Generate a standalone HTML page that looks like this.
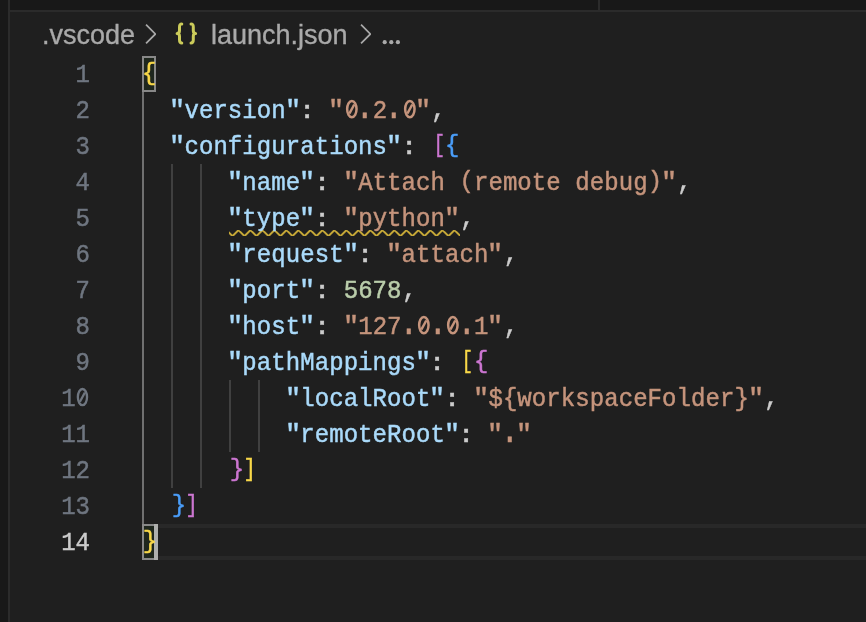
<!DOCTYPE html>
<html><head><meta charset="utf-8">
<style>
html,body{margin:0;padding:0}
body{width:866px;height:622px;overflow:hidden;background:#181818;position:relative;font-family:"Liberation Mono",monospace}
.a{position:absolute}
#editor{left:10px;top:12px;width:856px;height:610px;background:#1f1f1f}
#lb{left:8px;top:0;width:2px;height:622px;background:#2b2b2b}
#tb{left:10px;top:10px;width:856px;height:2px;background:#2b2b2b}
#ts{left:598px;top:0;width:2px;height:10px;background:#2b2b2b}
.bc{position:absolute;font-family:"Liberation Sans",sans-serif;font-size:27px;line-height:30px;color:#a9a9a9;white-space:pre;top:20px;will-change:transform;-webkit-text-stroke:0.35px}
.ln{position:absolute;left:0;width:90px;text-align:right;color:#6f7680;font-size:24px;line-height:36px;height:36px;transform:scaleY(1.1);transform-origin:0 8px;will-change:transform;-webkit-text-stroke:0.45px}
.cl{position:absolute;left:141.45px;letter-spacing:0.07px;font-size:24px;line-height:36px;height:36px;white-space:pre;color:#cccccc;transform:scaleY(1.1);transform-origin:0 8px;will-change:transform;-webkit-text-stroke:0.45px}
.k{color:#aadafa}.s{color:#c5947c}.n{color:#bacdab}
.g{color:#f9d849}.o{color:#cc76d1}.b{color:#4a9df8}
.br{display:inline-block;transform:scaleY(0.93);transform-origin:0 6px}
.z{color:transparent}
.cm{display:inline-block;transform:translate(0.75px,-0.6px)}
.pa{display:inline-block;transform:scaleY(0.9);transform-origin:0 6px}
.q{display:inline-block;transform:translateX(-0.2px) scaleX(1.12);transform-origin:7px 0}
.pd{display:inline-block;transform:translate(-0.3px,0.2px) scale(1.25,1.3);transform-origin:7.4px 22.6px}
.br.bl{transform:scale(0.8,0.93);transform-origin:12.4px 6px}
.br.brr{transform:translateX(2px) scale(0.86,0.93);transform-origin:-4.2px 6px}
.br.cb{transform:translateX(1.8px) scaleY(0.93)}
.co{display:inline-block;transform:translateY(1px) scale(1.2,0.88);transform-origin:7.6px 19px}
.guide{position:absolute;width:2px;background:#404040}
</style></head><body>
<div id="editor" class="a"></div>
<div id="lb" class="a"></div>
<div id="tb" class="a"></div>
<div id="ts" class="a"></div>

<!-- breadcrumbs -->
<div class="bc" style="left:41.5px">.vscode</div>
<div class="bc" style="left:210.8px">launch.json</div>


<!-- breadcrumb icons -->
<svg class="a" style="left:134.4px;top:18px" width="32" height="32" viewBox="0 0 16 16"><path fill="#a9a9a9" d="M10.072 8.024L5.715 3.667l.618-.62L11 7.716v.618L6.333 13l-.618-.619 4.357-4.357z"/></svg>
<svg class="a" style="left:348.6px;top:18px" width="32" height="32" viewBox="0 0 16 16"><path fill="#a9a9a9" d="M10.072 8.024L5.715 3.667l.618-.62L11 7.716v.618L6.333 13l-.618-.619 4.357-4.357z"/></svg>
<svg class="a" style="left:170px;top:18px" width="32" height="32" viewBox="0 0 32 32"><g fill="none" stroke="#cbcb5a" stroke-width="3" stroke-linecap="round" stroke-linejoin="round">
<path d="M11.8,5.9 C10,5.9 9.5,6.8 9.5,9 L9.5,12.6 C9.5,14.5 8.8,15.4 7.1,15.4 C8.8,15.4 9.5,16.3 9.5,18.2 L9.5,21.8 C9.5,24 10,25 11.8,25"/>
<path d="M21,5.9 C22.8,5.9 23.3,6.8 23.3,9 L23.3,12.6 C23.3,14.5 24,15.4 25.6,15.4 C24,15.4 23.3,16.3 23.3,18.2 L23.3,21.8 C23.3,24 22.8,25 21,25"/>
</g></svg>
<svg class="a" style="left:380px;top:38px" width="22" height="8"><g fill="#a9a9a9"><circle cx="4.7" cy="4.2" r="2.1"/><circle cx="11.3" cy="4.2" r="2.1"/><circle cx="17.9" cy="4.2" r="2.1"/></g></svg>

<!-- indent guides -->
<div class="guide" style="left:171px;top:164px;height:324px"></div>
<div class="guide" style="left:200px;top:164px;height:324px"></div>
<div class="guide" style="left:229px;top:380px;height:72px"></div>
<div class="guide" style="left:258px;top:380px;height:72px"></div>
<div class="guide" style="left:142px;top:92px;height:432px;background:#707070"></div>

<!-- current line border -->
<div class="a" style="left:142px;top:524px;width:724px;height:36px;box-sizing:border-box;border-top:4px solid #282828;border-bottom:4px solid #282828"></div>

<!-- bracket match boxes -->
<div class="a" style="left:142px;top:56px;width:14px;height:36px;box-sizing:border-box;border:2px solid #888888;background:#1e261d"></div>
<div class="a" style="left:142px;top:524px;width:16px;height:36px;box-sizing:border-box;border:2px solid #888888;background:#1e261d"></div>
<!-- cursor -->
<div class="a" style="left:154px;top:524px;width:4px;height:36px;background:#aeafad"></div>

<!-- squiggle -->
<svg class="a" style="left:228.5px;top:230px" width="232.4" height="6"><defs><pattern id="sq" width="12" height="6" patternUnits="userSpaceOnUse"><g fill="#c6a837" transform="scale(2)"><polygon points="5.5,0 2.5,3 1.1,3 4.1,0"/><polygon points="4,0 6,2 6,0.6 4.7,0"/><polygon points="0,2 1,3 2.4,3 0,0.6"/></g></pattern></defs><rect width="231" height="6" fill="url(#sq)"/></svg>

<!-- line numbers -->
<div class="ln" style="top:56px">1</div>
<div class="ln" style="top:92px">2</div>
<div class="ln" style="top:128px">3</div>
<div class="ln" style="top:164px">4</div>
<div class="ln" style="top:200px">5</div>
<div class="ln" style="top:236px">6</div>
<div class="ln" style="top:272px">7</div>
<div class="ln" style="top:308px">8</div>
<div class="ln" style="top:344px">9</div>
<div class="ln" style="top:380px">1<span class="z">0</span></div>
<div class="ln" style="top:416px">11</div>
<div class="ln" style="top:452px">12</div>
<div class="ln" style="top:488px">13</div>
<div class="ln" style="top:524px;color:#cccccc">14</div>

<!-- code -->
<div class="cl" style="top:56px"><span class="g br" style="transform:translateX(1px) scaleY(0.93)">{</span></div>
<div class="cl" style="top:92px">  <span class="k"><span class="q">"</span>version<span class="q">"</span></span><span class="co">:</span> <span class="s"><span class="q">"</span><span class="z">0</span><span class="pd">.</span>2<span class="pd">.</span><span class="z">0</span><span class="q">"</span></span><span class="cm">,</span></div>
<div class="cl" style="top:128px">  <span class="k"><span class="q">"</span>configurations<span class="q">"</span></span><span class="co">:</span> <span class="o br bl">[</span><span class="b br">{</span></div>
<div class="cl" style="top:164px">      <span class="k"><span class="q">"</span>name<span class="q">"</span></span><span class="co">:</span> <span class="s"><span class="q">"</span>Attach <span class="pa">(</span>remote debug<span class="pa">)</span><span class="q">"</span></span><span class="cm">,</span></div>
<div class="cl" style="top:200px">      <span class="k"><span class="q">"</span>type<span class="q">"</span></span><span class="co">:</span> <span class="s"><span class="q">"</span>python<span class="q">"</span></span><span class="cm">,</span></div>
<div class="cl" style="top:236px">      <span class="k"><span class="q">"</span>request<span class="q">"</span></span><span class="co">:</span> <span class="s"><span class="q">"</span>attach<span class="q">"</span></span><span class="cm">,</span></div>
<div class="cl" style="top:272px">      <span class="k"><span class="q">"</span>port<span class="q">"</span></span><span class="co">:</span> <span class="n">5678</span><span class="cm">,</span></div>
<div class="cl" style="top:308px">      <span class="k"><span class="q">"</span>host<span class="q">"</span></span><span class="co">:</span> <span class="s"><span class="q">"</span>127<span class="pd">.</span><span class="z">0</span><span class="pd">.</span><span class="z">0</span><span class="pd">.</span>1<span class="q">"</span></span><span class="cm">,</span></div>
<div class="cl" style="top:344px">      <span class="k"><span class="q">"</span>pathMappings<span class="q">"</span></span><span class="co">:</span> <span class="g br bl">[</span><span class="o br">{</span></div>
<div class="cl" style="top:380px">          <span class="k"><span class="q">"</span>localRoot<span class="q">"</span></span><span class="co">:</span> <span class="s"><span class="q">"</span>${workspaceFolder}<span class="q">"</span></span><span class="cm">,</span></div>
<div class="cl" style="top:416px">          <span class="k"><span class="q">"</span>remoteRoot<span class="q">"</span></span><span class="co">:</span> <span class="s"><span class="q">"</span><span class="pd">.</span><span class="q">"</span></span></div>
<div class="cl" style="top:452px">      <span class="o br cb">}</span><span class="g br brr">]</span></div>
<div class="cl" style="top:488px">  <span class="b br cb">}</span><span class="o br brr">]</span></div>
<div class="cl" style="top:524px"><span class="g br cb">}</span></div>

<!-- slashed zeros -->
<svg class="a" style="left:343.75px;top:92px" width="16" height="36"><g fill="none" stroke="#c5947c" stroke-width="2.5"><ellipse cx="7.85" cy="17.1" rx="4.7" ry="8.2"/><path d="M5.30,21.7 L10.30,12.5"/></g></svg>
<svg class="a" style="left:401.55px;top:92px" width="16" height="36"><g fill="none" stroke="#c5947c" stroke-width="2.5"><ellipse cx="7.85" cy="17.1" rx="4.7" ry="8.2"/><path d="M5.30,21.7 L10.30,12.5"/></g></svg>
<svg class="a" style="left:416.00px;top:308px" width="16" height="36"><g fill="none" stroke="#c5947c" stroke-width="2.5"><ellipse cx="7.85" cy="17.1" rx="4.7" ry="8.2"/><path d="M5.30,21.7 L10.30,12.5"/></g></svg>
<svg class="a" style="left:444.90px;top:308px" width="16" height="36"><g fill="none" stroke="#c5947c" stroke-width="2.5"><ellipse cx="7.85" cy="17.1" rx="4.7" ry="8.2"/><path d="M5.30,21.7 L10.30,12.5"/></g></svg>
<svg class="a" style="left:75.10px;top:380px" width="16" height="36"><g fill="none" stroke="#6f7680" stroke-width="2.3"><ellipse cx="7.45" cy="17.1" rx="4.6" ry="8.1"/><path d="M4.90,21.7 L9.90,12.5"/></g></svg>
</body></html>
